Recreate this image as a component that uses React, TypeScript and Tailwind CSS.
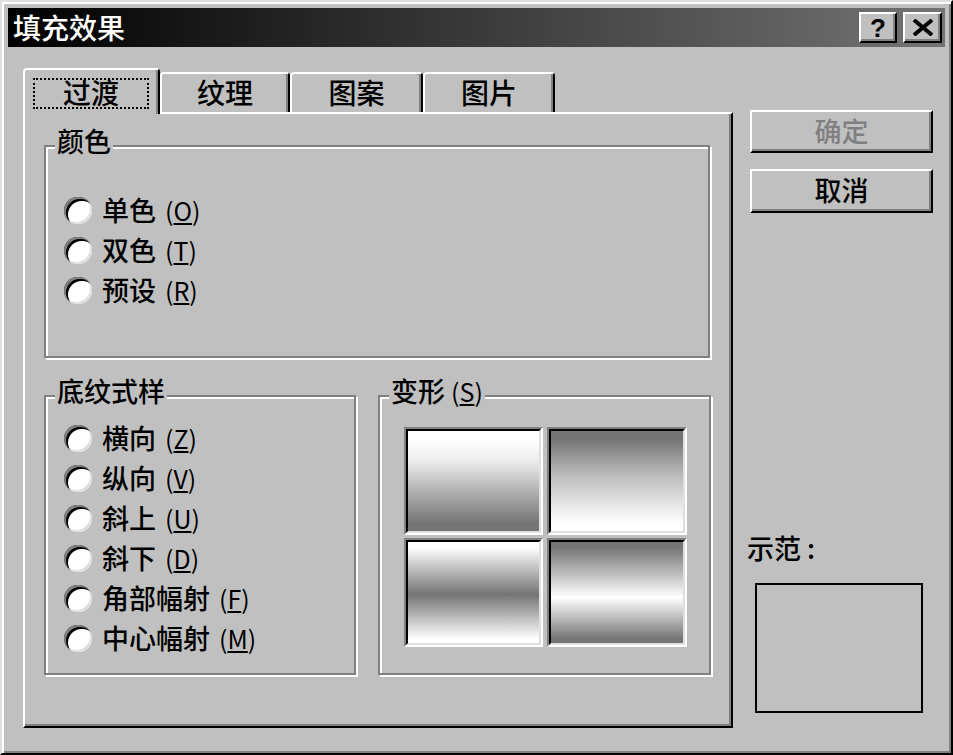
import React from 'react';

const font = "font-['Noto_Sans_CJK_SC',sans-serif]";

const Radio = () => (
  <span className="w-[28px] h-[27px] shrink-0 rounded-full bg-white shadow-[inset_2px_2px_0_#808080,inset_4px_4px_0_#000,inset_-2px_-2px_0_#dfdfdf]" />
);

const Option = ({ label, hotkey }: { label: string; hotkey: string }) => (
  <div className="flex items-center h-[40px]">
    <Radio />
    <span className="ml-[10px] text-[27px] leading-[28px] font-medium text-black">{label}</span>
    <span className="ml-[9px] text-[25px] leading-[28px] text-black">
      (<span className="underline underline-offset-2">{hotkey}</span>)
    </span>
  </div>
);

const Group = ({
  title,
  className,
  children,
}: {
  title: React.ReactNode;
  className: string;
  children: React.ReactNode;
}) => (
  <div
    className={`relative border-2 border-[#808080] shadow-[2px_2px_0_#fff,inset_2px_2px_0_#fff] ${className}`}
  >
    <span className="absolute -top-[20px] left-[9px] px-[2px] bg-[#c0c0c0] text-[27px] leading-[28px] font-medium text-black">
      {title}
    </span>
    {children}
  </div>
);

const Swatch = ({ bg }: { bg: string }) => (
  <div className="border-2 border-t-[#808080] border-l-[#808080] border-r-white border-b-white">
    <div className={`w-full h-full border-2 border-t-black border-l-black border-r-[#dfdfdf] border-b-[#dfdfdf] ${bg}`} />
  </div>
);

const raised =
  'border-2 border-t-white border-l-white border-r-black border-b-black shadow-[inset_-2px_-2px_0_#808080]';

export default function App() {
  return (
    <div
      className={`${font} w-[953px] h-[755px] bg-[#c0c0c0] border-2 border-t-[#dfdfdf] border-l-[#dfdfdf] border-r-black border-b-black shadow-[inset_2px_2px_0_#fff,inset_-2px_-2px_0_#808080] p-[6px] overflow-hidden select-none`}
    >
      {/* Title bar */}
      <div className="h-[39px] flex items-center bg-[linear-gradient(to_right,#000,#747474)] pl-[5px] pr-[3px]">
        <span className="text-white text-[28px] leading-[30px] font-medium pb-[2px]">填充效果</span>
        <div className="ml-auto flex gap-[6px]">
          <button className={`${raised} w-[38px] h-[31px] bg-[#c0c0c0] flex items-center justify-center`}>
            <span className="font-['Liberation_Sans',sans-serif] font-bold text-[26px] leading-none text-black">?</span>
          </button>
          <button className={`${raised} w-[39px] h-[31px] bg-[#c0c0c0] flex items-center justify-center`}>
            <svg width="22" height="17" viewBox="0 0 22 17">
              <path d="M2 1 L20 16 M20 1 L2 16" stroke="#000" strokeWidth="4" fill="none" />
            </svg>
          </button>
        </div>
      </div>

      {/* Body */}
      <div className="flex mt-[21px] ml-[15px]">
        <div className="w-[710px]">
          {/* Tabs */}
          <div className="flex items-end h-[44px]">
            <div className="relative z-10 h-[46px] -mb-[2px] w-[137px] bg-[#c0c0c0] border-t-2 border-l-2 border-r-2 border-t-white border-l-white border-r-black rounded-t-[4px] shadow-[inset_-2px_0_0_#808080] pl-[8px] pt-[8px]">
              <div className="w-[116px] h-[31px] border-2 border-dotted border-black flex items-center justify-center text-[28px] leading-[28px] font-medium text-black pb-[3px]">
                过渡
              </div>
            </div>
            {[
              ['纹理', 'w-[130px]'],
              ['图案', 'w-[133px]'],
              ['图片', 'w-[132px]'],
            ].map(([t, w]) => (
              <div
                key={t}
                className={`${w} h-[40px] border-t-2 border-l-2 border-r-2 border-t-white border-l-white border-r-black rounded-t-[4px] shadow-[inset_-2px_0_0_#808080] flex items-center justify-center text-[28px] leading-[28px] font-medium text-black pb-[2px]`}
              >
                {t}
              </div>
            ))}
          </div>

          {/* Panel */}
          <div className="h-[616px] border-2 border-t-white border-l-white border-r-black border-b-black shadow-[inset_-2px_-2px_0_#808080] pl-[19px] pt-[31px]">
            <Group title="颜色" className="w-[666px] h-[213px] pt-[43px] pl-[18px]">
              <Option label="单色" hotkey="O" />
              <Option label="双色" hotkey="T" />
              <Option label="预设" hotkey="R" />
            </Group>

            <div className="flex mt-[37px]">
              <Group title="底纹式样" className="w-[312px] h-[280px] pt-[21px] pl-[18px]">
                <Option label="横向" hotkey="Z" />
                <Option label="纵向" hotkey="V" />
                <Option label="斜上" hotkey="U" />
                <Option label="斜下" hotkey="D" />
                <Option label="角部幅射" hotkey="F" />
                <Option label="中心幅射" hotkey="M" />
              </Group>

              <Group
                title={
                  <>
                    变形 <span className="text-[25px] font-normal">(<span className="underline underline-offset-2">S</span>)</span>
                  </>
                }
                className="ml-[22px] w-[333px] h-[280px] pt-[30px] pl-[24px]"
              >
                <div className="grid grid-cols-[139px_140px] grid-rows-[108px_109px] gap-x-[4px] gap-y-[3px]">
                  <Swatch bg="bg-[linear-gradient(to_bottom,#fff_8%,#ececec_30%,#747474_92%)]" />
                  <Swatch bg="bg-[linear-gradient(to_bottom,#747474_8%,#bdbdbd_45%,#fff_92%)]" />
                  <Swatch bg="bg-[linear-gradient(to_bottom,#fff_5%,#747474_52%,#fff_96%)]" />
                  <Swatch bg="bg-[linear-gradient(to_bottom,#747474_5%,#fff_55%,#747474_96%)]" />
                </div>
              </Group>
            </div>
          </div>
        </div>

        {/* Right column */}
        <div className="ml-[17px] w-[183px] h-[660px] flex flex-col">
          <button className={`${raised} mt-[42px] h-[43px] bg-[#c0c0c0] text-[27px] leading-[28px] font-medium text-[#808080] pb-[2px]`}>
            确定
          </button>
          <button className={`${raised} mt-[16px] h-[44px] bg-[#c0c0c0] text-[27px] leading-[28px] font-medium text-black pb-[2px]`}>
            取消
          </button>
          <span className="mt-auto -ml-[3px] text-[27px] leading-[28px] font-medium text-black">示范 :</span>
          <div className="mt-[21px] ml-[5px] mb-[15px] w-[168px] h-[130px] border-2 border-black" />
        </div>
      </div>
    </div>
  );
}
